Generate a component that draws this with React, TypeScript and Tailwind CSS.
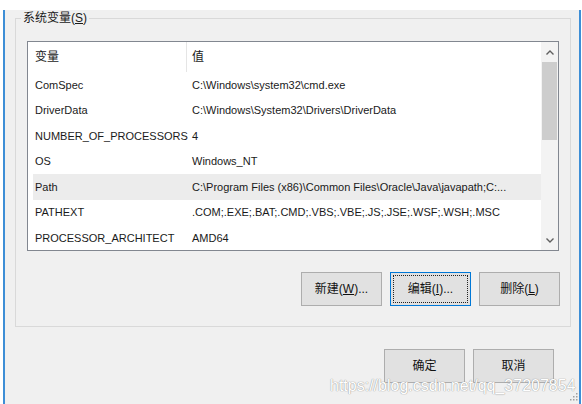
import React from "react";

const font = {
  fontFamily: '"Liberation Sans", "Noto Sans CJK SC", sans-serif',
};

const rows: { name: string; value: string; selected?: boolean }[] = [
  { name: "ComSpec", value: "C:\\Windows\\system32\\cmd.exe" },
  { name: "DriverData", value: "C:\\Windows\\System32\\Drivers\\DriverData" },
  { name: "NUMBER_OF_PROCESSORS", value: "4" },
  { name: "OS", value: "Windows_NT" },
  {
    name: "Path",
    value: "C:\\Program Files (x86)\\Common Files\\Oracle\\Java\\javapath;C:...",
    selected: true,
  },
  { name: "PATHEXT", value: ".COM;.EXE;.BAT;.CMD;.VBS;.VBE;.JS;.JSE;.WSF;.WSH;.MSC" },
  { name: "PROCESSOR_ARCHITECT", value: "AMD64" },
];

function WinButton({
  children,
  focused,
}: {
  children: React.ReactNode;
  focused?: boolean;
}) {
  return (
    <div
      className={
        "w-[81px] h-[34px] flex items-center justify-center bg-[#e1e1e1] text-[12px] text-[#111] border " +
        (focused ? "border-[#0078d7] p-[2px]" : "border-[#adadad]")
      }
    >
      {focused ? (
        <div className="w-full h-full flex items-center justify-center border border-dotted border-[#222]">
          {children}
        </div>
      ) : (
        children
      )}
    </div>
  );
}

export default function App() {
  return (
    <div className="w-[582px] h-[404px] bg-white overflow-hidden relative" style={font}>
      <div className="ml-[3px] w-[578px] h-[403px] bg-[#f0f0f0] border-l-2 border-r-2 border-b-2 border-[#3d8ed6] pl-[10px] pr-[8px]">
        <fieldset className="mt-[10px] h-[317px] border border-[#d9d9d9] pl-[11px] pr-[9px] pt-[14px]">
          <legend className="-ml-[6px] px-[2px] text-[12px] text-[#1a1a1a] leading-[17px]">
            系统变量(<span className="underline">S</span>)
          </legend>

          {/* list view */}
          <div className="w-[532px] h-[210px] border border-[#828790] bg-white flex">
            <div className="flex-1 flex flex-col text-[11px] text-[#1a1a1a]">
              <div className="h-[30px] flex items-center pl-[5px] shrink-0 text-[12px]">
                <div className="w-[153px] pl-[2px]">变量</div>
                <div className="w-px h-full bg-[#e5e5e5]" />
                <div className="pl-[5px]">值</div>
              </div>
              {rows.map((r) => (
                <div key={r.name} className="pl-[5px]">
                  <div
                    className={
                      "h-[25.5px] flex items-center whitespace-nowrap " +
                      (r.selected ? "bg-[#ececec]" : "")
                    }
                  >
                    <div className="w-[157px] pl-[2px] overflow-hidden">{r.name}</div>
                    <div className="pl-[2px]">{r.value}</div>
                  </div>
                </div>
              ))}
            </div>
            {/* scrollbar */}
            <div className="w-[17px] bg-[#f3f3f3] flex flex-col items-center shrink-0">
              <div className="h-[20px] w-full flex items-center justify-center">
                <svg width="8" height="5" viewBox="0 0 8 5">
                  <path d="M0.5 4.5 L4 1 L7.5 4.5" fill="none" stroke="#606060" strokeWidth="1.4" />
                </svg>
              </div>
              <div className="w-[15px] h-[78px] bg-[#cdcdcd]" />
              <div className="flex-1" />
              <div className="h-[20px] w-full flex items-center justify-center">
                <svg width="8" height="5" viewBox="0 0 8 5">
                  <path d="M0.5 0.5 L4 4 L7.5 0.5" fill="none" stroke="#606060" strokeWidth="1.4" />
                </svg>
              </div>
            </div>
          </div>

          <div className="flex justify-end gap-[8px] mt-[21px] pr-[1px]">
            <WinButton>
              新建(<span className="underline">W</span>)...
            </WinButton>
            <WinButton focused>
              编辑(<span className="underline">I</span>)...
            </WinButton>
            <WinButton>
              删除(<span className="underline">L</span>)
            </WinButton>
          </div>
        </fieldset>

        <div className="flex justify-end gap-[8px] mt-[22px] pr-[17px]">
          <WinButton>确定</WinButton>
          <WinButton>取消</WinButton>
        </div>
      </div>

      {/* watermark */}
      <div className="absolute left-[330px] top-[374px] text-[16px] text-white [text-shadow:0_0_1px_#9a9a9a,0_0_1px_#9a9a9a] whitespace-nowrap">
        https://blog.csdn.net/qq_37207854
      </div>
      {/* resize grip */}
      <svg className="absolute left-[570px] top-[393px]" width="8" height="8" viewBox="0 0 8 8">
        <rect x="6" y="0" width="1.5" height="1.5" fill="#a0a0a0" />
        <rect x="3" y="3" width="1.5" height="1.5" fill="#a0a0a0" />
        <rect x="6" y="3" width="1.5" height="1.5" fill="#a0a0a0" />
        <rect x="0" y="6" width="1.5" height="1.5" fill="#a0a0a0" />
        <rect x="3" y="6" width="1.5" height="1.5" fill="#a0a0a0" />
        <rect x="6" y="6" width="1.5" height="1.5" fill="#a0a0a0" />
      </svg>
    </div>
  );
}
